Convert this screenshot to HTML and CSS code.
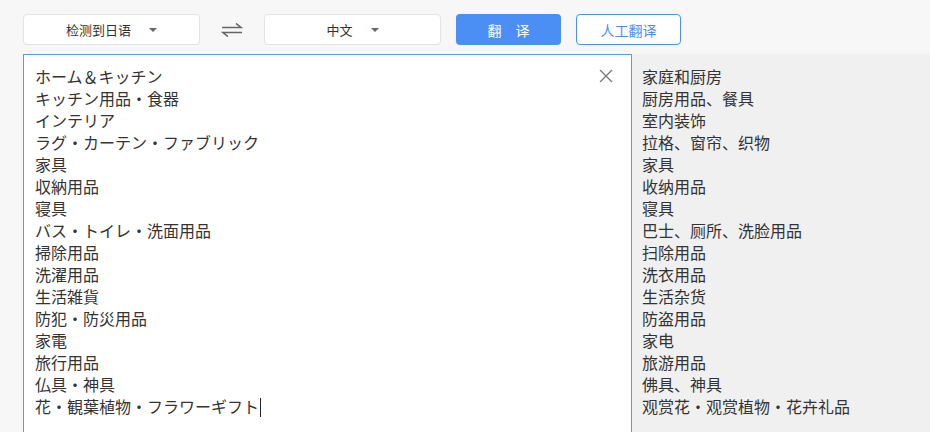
FILE: index.html
```html
<!DOCTYPE html>
<html lang="zh-CN">
<head>
    <meta charset="UTF-8">
    <title>翻译</title>
    <link rel="stylesheet" href="styles.css">
</head>
<body>

<div class="toolbar">
    <!-- Language selects -->
    <div class="lang-select">检测到日语<span class="caret"></span></div>
    <div class="swap">
        <svg width="22" height="14" viewBox="0 0 22 14">
            <path d="M1 4.5H20L15 0.5" fill="none" stroke="#666" stroke-width="1.6"/>
            <path d="M21 9.5H2L7 13.5" fill="none" stroke="#666" stroke-width="1.6"/>
        </svg>
    </div>
    <div class="lang-select">中文<span class="caret"></span></div>

    <button class="btn-translate"><span>翻</span><span>译</span></button>
    <button class="btn-human">人工翻译</button>
</div>

<div class="main">
    <!-- Source text -->
    <div class="source" lang="ja">
        <div class="close">
            <svg width="14" height="14" viewBox="0 0 14 14">
                <path d="M1 1L13 13M13 1L1 13" stroke="#777" stroke-width="1.3"/>
            </svg>
        </div>
        <div>ホーム＆キッチン</div>
        <div>キッチン用品・食器</div>
        <div>インテリア</div>
        <div>ラグ・カーテン・ファブリック</div>
        <div>家具</div>
        <div>収納用品</div>
        <div>寝具</div>
        <div>バス・トイレ・洗面用品</div>
        <div>掃除用品</div>
        <div>洗濯用品</div>
        <div>生活雑貨</div>
        <div>防犯・防災用品</div>
        <div>家電</div>
        <div>旅行用品</div>
        <div>仏具・神具</div>
        <div>花・観葉植物・フラワーギフト<span class="cursor"></span></div>
    </div>

    <!-- Result -->
    <div class="result">
        <div>家庭和厨房</div>
        <div>厨房用品、餐具</div>
        <div>室内装饰</div>
        <div>拉格、窗帘、织物</div>
        <div>家具</div>
        <div>收纳用品</div>
        <div>寝具</div>
        <div>巴士、厕所、洗脸用品</div>
        <div>扫除用品</div>
        <div>洗衣用品</div>
        <div>生活杂货</div>
        <div>防盗用品</div>
        <div>家电</div>
        <div>旅游用品</div>
        <div>佛具、神具</div>
        <div>观赏花・观赏植物・花卉礼品</div>
    </div>
</div>

</body>
</html>
```

FILE: styles.css
```css
/* Global */
body {
    margin: 0;
    background-color: #f7f7f7;
    font-family: "Noto Sans CJK SC", "Noto Sans", sans-serif;
    color: #333;
    height: 100vh;
    overflow: hidden;
}

/* Toolbar */
.toolbar {
    display: flex;
    align-items: center;
    padding: 14px 0 0 23px;
    height: 31px;
}

.lang-select {
    width: 175px;
    height: 29px;
    background-color: #fff;
    border: 1px solid #e3e3e3;
    border-radius: 4px;
    display: flex;
    justify-content: center;
    align-items: center;
    font-size: 13px;
    color: #333;
}

.caret {
    width: 0;
    height: 0;
    border-left: 4px solid transparent;
    border-right: 4px solid transparent;
    border-top: 4px solid #666;
    margin-left: 18px;
}

.swap {
    width: 64px;
    display: flex;
    justify-content: center;
    align-items: center;
}

.btn-translate {
    margin-left: 15px;
    width: 105px;
    height: 31px;
    background-color: #4b8ff5;
    border: none;
    border-radius: 4px;
    color: #fff;
    font-family: inherit;
    font-size: 14px;
    display: flex;
    justify-content: center;
    align-items: center;
    gap: 14px;
    padding: 0;
}

.btn-human {
    margin-left: 15px;
    width: 105px;
    height: 31px;
    background-color: #fff;
    border: 1px solid #4b8ff5;
    border-radius: 4px;
    color: #4b8ff5;
    font-family: inherit;
    font-size: 14px;
    padding: 0;
}

/* Main area */
.main {
    display: flex;
    margin-top: 9px;
    padding-left: 23px;
    height: 378px;
}

.source {
    position: relative;
    width: 585px;
    background-color: #fff;
    border: 1px solid #5a9be6;
    border-bottom: none;
    padding: 10px 11px 0;
    font-family: "Noto Sans CJK JP", "Noto Sans CJK SC", sans-serif;
    font-size: 16px;
    line-height: 22px;
}

.close {
    position: absolute;
    top: 14px;
    right: 18px;
    line-height: 0;
}

.cursor {
    display: inline-block;
    width: 1px;
    height: 19px;
    background-color: #222;
    vertical-align: -4px;
    margin-left: 1px;
}

.result {
    flex: 1;
    background-color: #f0f0f0;
    padding: 11px 10px 0;
    font-size: 16px;
    line-height: 22px;
}
```
